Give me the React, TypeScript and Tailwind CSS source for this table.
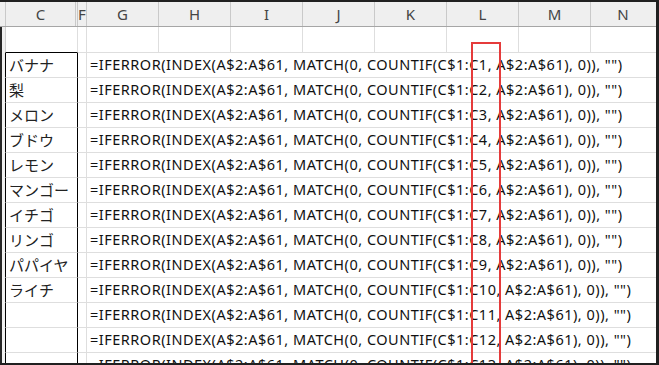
const fruits = [
  "バナナ",
  "梨",
  "メロン",
  "ブドウ",
  "レモン",
  "マンゴー",
  "イチゴ",
  "リンゴ",
  "パパイヤ",
  "ライチ",
  "",
  "",
  "",
];

const wideCols = ["G", "H", "I", "J", "K", "L", "M"];

const font = "font-['Noto_Sans','Noto_Sans_CJK_JP',sans-serif]";

function HeaderRow() {
  return (
    <div className="flex h-[25px] shrink-0 border-b border-[#a6a6a6] bg-[#efefef] text-[15px] text-[#444]">
      <div className="w-[5px] shrink-0" />
      <div className="flex w-[71px] shrink-0 items-center justify-center border-x border-[#c9c9c9]">C</div>
      <div className="w-[2px] shrink-0 border-r border-[#c9c9c9]" />
      <div className="flex w-[9px] shrink-0 items-center justify-center overflow-hidden border-r border-[#c9c9c9]">F</div>
      {wideCols.map((c) => (
        <div key={c} className="flex w-[72px] shrink-0 items-center justify-center border-r border-[#c9c9c9]">
          {c}
        </div>
      ))}
      <div className="flex flex-1 items-center justify-center pr-[1px]">N</div>
    </div>
  );
}

function RowStrip() {
  return <div className="w-[5px] shrink-0 border-l-2 border-[#262626] bg-[#f0f0f0]" />;
}

function EmptyRow() {
  return (
    <div className="flex h-[26px] shrink-0">
      <RowStrip />
      <div className="w-[73px] shrink-0 border-b border-l border-r border-b-black border-l-[#d0d0d0] border-r-[#dedede]" />
      <div className="w-[9px] shrink-0 border-r border-b border-[#dedede]" />
      {wideCols.map((c) => (
        <div key={c} className="w-[72px] shrink-0 border-r border-b border-[#dedede]" />
      ))}
      <div className="flex-1 border-b border-[#dedede]" />
    </div>
  );
}

function FormulaRow({ fruit, n }: { fruit: string; n: number }) {
  return (
    <div className="flex h-[25px] shrink-0">
      <RowStrip />
      <div className="flex w-[73px] shrink-0 items-center border-x border-black border-b border-b-[#dedede] pl-[3px] text-[15px] text-[#222] whitespace-nowrap">
        {fruit}
      </div>
      <div className="w-[9px] shrink-0 border-r border-b border-[#dedede]" />
      <div className="flex flex-1 items-center overflow-hidden border-b border-[#dedede] pl-[3px] text-[14.5px] tracking-[0.5px] text-[#111] whitespace-nowrap">
        =IFERROR(INDEX(A$2:A$61, MATCH(0, COUNTIF(C$1:C{n}, A$2:A$61), 0)), "")
      </div>
    </div>
  );
}

export default function App() {
  return (
    <div
      className={`relative flex h-[365px] w-[659px] flex-col overflow-hidden border-t-2 border-b-2 border-r-[3px] border-[#202020] bg-white ${font}`}
    >
      <HeaderRow />
      <EmptyRow />
      {fruits.map((f, i) => (
        <FormulaRow key={i} fruit={f} n={i + 1} />
      ))}
      {/* highlight around the relative row reference */}
      <div className="absolute left-[471px] top-[40px] h-[340px] w-[30px] border-2 border-[#e53b3b]" />
    </div>
  );
}
